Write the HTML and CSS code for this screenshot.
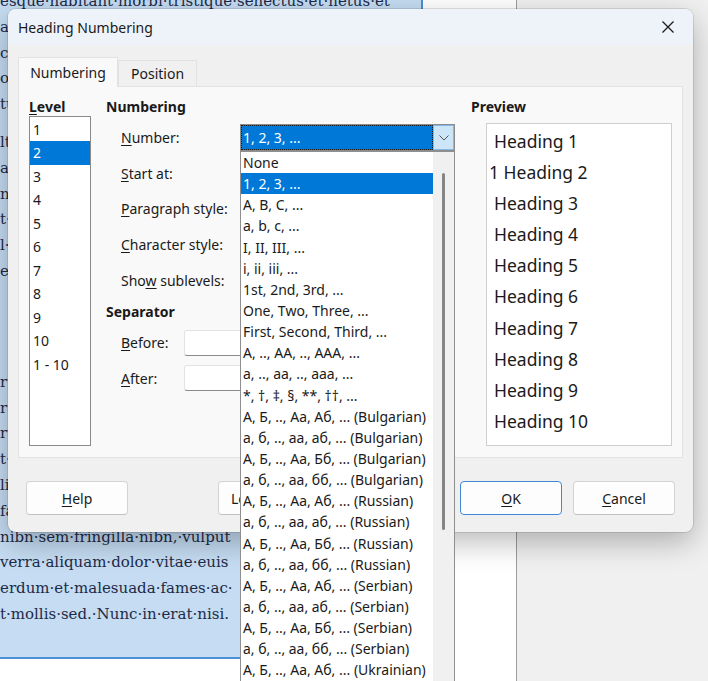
FILE: index.html
```html
<!DOCTYPE html>
<html>
<head>
<meta charset="utf-8">
<link rel="stylesheet" href="styles.css">
</head>
<body>
<div class="workspace">
  <div class="page">
    <div class="sel">
      <div class="para first">
        <div class="line">esque·habitant·morbi·tristique·senectus·et·netus·et</div>
        <div class="line">ale</div>
        <div class="line">co</div>
        <div class="line">o:·</div>
        <div class="line">tur</div>
      </div>
      <div class="para gapbig">
        <div class="line">lt·</div>
        <div class="line">am</div>
        <div class="line">ne</div>
        <div class="line">t·a</div>
        <div class="line">l·c</div>
        <div class="line">em</div>
      </div>
      <div class="para">
        <div class="line">r·t</div>
        <div class="line">ra</div>
        <div class="line">ru</div>
        <div class="line">t·e</div>
        <div class="line">lis</div>
        <div class="line">fa</div>
        <div class="line">nibn·sem·fringilla·nibn,·vulput</div>
        <div class="line">verra·aliquam·dolor·vitae·euis</div>
        <div class="line">erdum·et·malesuada·fames·ac·</div>
        <div class="line">t·mollis·sed.·Nunc·in·erat·nisi.</div>
      </div>
    </div>
  </div>
  <div class="appbg"></div>
</div>

<div class="dialog">
  <div class="titlebar">
    <span class="title">Heading Numbering</span>
    <svg class="close" width="12" height="12" viewBox="0 0 12 12"><path d="M0.5 0.5 L11.5 11.5 M11.5 0.5 L0.5 11.5" stroke="#1b1b1b" stroke-width="1.3" fill="none"/></svg>
  </div>
  <div class="content">
    <div class="tabs">
      <div class="tab active">Numbering</div>
      <div class="tab">Position</div>
    </div>
    <div class="panel">
      <div class="levelcol">
        <div class="heading"><u>L</u>evel</div>
        <div class="levellist">
          <div class="litem">1</div>
          <div class="litem selected">2</div>
          <div class="litem">3</div>
          <div class="litem">4</div>
          <div class="litem">5</div>
          <div class="litem">6</div>
          <div class="litem">7</div>
          <div class="litem">8</div>
          <div class="litem">9</div>
          <div class="litem">10</div>
          <div class="litem">1 - 10</div>
        </div>
      </div>
      <div class="numcol">
        <div class="heading">Numbering</div>
        <div class="rows">
          <div class="row">
            <span class="lbl wide"><u>N</u>umber:</span>
            <div class="combo">
              <div class="field">1, 2, 3, ...</div>
              <div class="dropbtn"><svg width="10" height="6" viewBox="0 0 10 6"><path d="M0.5 0.5 L5 5 L9.5 0.5" stroke="#555" stroke-width="1" fill="none"/></svg></div>
            </div>
          </div>
          <div class="row"><span class="lbl"><u>S</u>tart at:</span></div>
          <div class="row"><span class="lbl"><u>P</u>aragraph style:</span></div>
          <div class="row"><span class="lbl"><u>C</u>haracter style:</span></div>
          <div class="row"><span class="lbl">Sho<u>w</u> sublevels:</span></div>
        </div>
        <div class="heading sep">Separator</div>
        <div class="rows seprows">
          <div class="row"><span class="lbl short"><u>B</u>efore:</span><div class="input"></div></div>
          <div class="row"><span class="lbl short"><u>A</u>fter:</span><div class="input"></div></div>
        </div>
      </div>
      <div class="prevcol">
        <div class="heading">Preview</div>
        <div class="preview">
          <div class="pitem">Heading 1</div>
          <div class="pitem num">1 Heading 2</div>
          <div class="pitem">Heading 3</div>
          <div class="pitem">Heading 4</div>
          <div class="pitem">Heading 5</div>
          <div class="pitem">Heading 6</div>
          <div class="pitem">Heading 7</div>
          <div class="pitem">Heading 8</div>
          <div class="pitem">Heading 9</div>
          <div class="pitem">Heading 10</div>
        </div>
      </div>
    </div>
  </div>
  <div class="buttons">
    <div class="btn"><u>H</u>elp</div>
    <div class="btn loadsave">Load/Save</div>
    <div class="btn ok"><u>O</u>K</div>
    <div class="btn cancel"><u>C</u>ancel</div>
  </div>
</div>

<div class="popup">
  <div class="plist">
    <div class="opt">None</div>
    <div class="opt selected">1, 2, 3, ...</div>
    <div class="opt">A, B, C, ...</div>
    <div class="opt">a, b, c, ...</div>
    <div class="opt">I, II, III, ...</div>
    <div class="opt">i, ii, iii, ...</div>
    <div class="opt">1st, 2nd, 3rd, ...</div>
    <div class="opt">One, Two, Three, ...</div>
    <div class="opt">First, Second, Third, ...</div>
    <div class="opt">A, .., AA, .., AAA, ...</div>
    <div class="opt">a, .., aa, .., aaa, ...</div>
    <div class="opt">*, †, ‡, §, **, ††, ...</div>
    <div class="opt">А, Б, .., Аа, Аб, ... (Bulgarian)</div>
    <div class="opt">а, б, .., аа, аб, ... (Bulgarian)</div>
    <div class="opt">А, Б, .., Аа, Бб, ... (Bulgarian)</div>
    <div class="opt">а, б, .., аа, бб, ... (Bulgarian)</div>
    <div class="opt">А, Б, .., Аа, Аб, ... (Russian)</div>
    <div class="opt">а, б, .., аа, аб, ... (Russian)</div>
    <div class="opt">А, Б, .., Аа, Бб, ... (Russian)</div>
    <div class="opt">а, б, .., аа, бб, ... (Russian)</div>
    <div class="opt">А, Б, .., Аа, Аб, ... (Serbian)</div>
    <div class="opt">а, б, .., аа, аб, ... (Serbian)</div>
    <div class="opt">А, Б, .., Аа, Бб, ... (Serbian)</div>
    <div class="opt">а, б, .., аа, бб, ... (Serbian)</div>
    <div class="opt">А, Б, .., Аа, Аб, ... (Ukrainian)</div>
  </div>
  <div class="pscroll"><div class="thumb"></div></div>
</div>
</body>
</html>
```

FILE: styles.css
```css
* { box-sizing: border-box; }

body {
  margin: 0;
  width: 708px;
  height: 681px;
  overflow: hidden;
  position: relative;
  background: #f0f0f0;
  font-family: "Noto Sans", "Open Sans", sans-serif;
  font-size: 14px;
  color: #1a1a1a;
}

u { text-decoration-thickness: 1px; text-underline-offset: 2px; }

/* background document */
.workspace { display: flex; height: 681px; }
.page {
  width: 517px;
  background: #ffffff;
  border-right: 1px solid #9c9c9c;
}
.sel {
  width: 423px;
  height: 659px;
  background: #c5dcf2;
  border-right: 2px solid #4b8fd5;
  border-bottom: 2px solid #4b8fd5;
  overflow: hidden;
  color: #1d2a48;
  font-family: "DejaVu Serif", "Liberation Serif", serif;
  font-size: 15px;
}
.para { margin: 0 0 12px; }
.para.first { margin-top: -11px; }
.para.gapbig { margin-bottom: 85px; }
.line { height: 25.8px; line-height: 25.8px; white-space: nowrap; }
.appbg { flex: 1; background: #f0f0f0; }

/* dialog */
.dialog {
  position: absolute;
  left: 8px;
  top: 9px;
  width: 685px;
  height: 523px;
  background: #f0f0f0;
  border-radius: 8px;
  box-shadow: 0 10px 30px rgba(0, 0, 0, 0.28), 0 0 0 1px rgba(0, 0, 0, 0.10);
  display: flex;
  flex-direction: column;
}
.titlebar {
  height: 36px;
  flex: none;
  background: #eef3fa;
  border-radius: 8px 8px 0 0;
  display: flex;
  align-items: center;
  justify-content: space-between;
  padding: 0 19px 0 10px;
  font-size: 14px;
}
.close { display: block; }

.content { padding: 12px 10px 0 10px; }
.tabs { display: flex; align-items: flex-end; height: 29px; }
.tab {
  height: 26px;
  padding: 0 12px;
  border: 1px solid #e2e2e2;
  border-bottom: none;
  background: #f0f0f0;
  display: flex;
  align-items: center;
}
.tab.active {
  width: 100px;
  height: 30px;
  justify-content: center;
  background: #f9f9f9;
  margin-bottom: -1px;
  position: relative;
  z-index: 1;
}

.panel {
  height: 372px;
  background: #f9f9f9;
  border: 1px solid #e2e2e2;
  padding: 11px 8px 11px 10px;
  display: flex;
}
.heading { height: 18px; line-height: 18px; font-weight: bold; }

.levelcol { width: 62px; display: flex; flex-direction: column; }
.levellist {
  height: 330px;
  background: #fff;
  border: 1px solid #8a8a8a;
  padding-top: 0.5px;
}
.litem { height: 23.5px; line-height: 23.5px; padding-left: 3px; }
.litem.selected { background: #0078d7; color: #fff; }

.numcol { width: 350px; margin-left: 15px; }
.rows { margin-top: 4px; }
.row { height: 35.6px; display: flex; align-items: center; padding-left: 15px; }
.lbl.wide { width: 119px; }
.lbl.short { width: 63px; }
.heading.sep { margin-top: 5px; }
.seprows { margin-top: 4px; }
.input {
  width: 160px;
  height: 26px;
  background: #fff;
  border: 1px solid #e3e3e3;
  border-bottom-color: #8a8a8a;
  border-radius: 3px;
}

.combo {
  width: 215px;
  height: 27px;
  border: 1px solid #8c8c8c;
  display: flex;
  background: #fff;
}
.field {
  flex: 1;
  background: #0078d7;
  color: #fff;
  outline: 1px dotted #1b1b1b;
  outline-offset: -1px;
  padding-left: 2px;
  line-height: 25px;
}
.dropbtn {
  width: 21px;
  background: #cde6f7;
  border: 1px solid #84b8e6;
  display: flex;
  align-items: center;
  justify-content: center;
}

.prevcol { flex: 1; margin-left: 15px; display: flex; flex-direction: column; }
.preview {
  margin-top: 7px;
  margin-left: 15px;
  width: 186px;
  height: 323px;
  background: #fff;
  border: 1px solid #cfcfcf;
  padding-top: 2px;
  font-size: 17.5px;
}
.pitem { height: 31.1px; line-height: 31.1px; padding-left: 7px; }
.pitem.num { padding-left: 2px; }

.buttons { display: flex; padding: 23px 18px 0 18px; }
.btn {
  width: 102px;
  height: 34px;
  background: #fdfdfd;
  border: 1px solid #d3d3d3;
  border-bottom-color: #c2c2c2;
  border-radius: 4px;
  display: flex;
  align-items: center;
  justify-content: center;
}
.btn.loadsave { margin-left: 90px; width: 112px; justify-content: flex-start; padding-left: 12px; }
.btn.ok { margin-left: auto; border: 1px solid #3f88d4; }
.btn.cancel { margin-left: 11px; }

/* dropdown popup */
.popup {
  position: absolute;
  left: 240px;
  top: 151px;
  width: 215px;
  height: 540px;
  background: #fff;
  border: 1px solid #8f8f8f;
  display: flex;
}
.plist { width: 192px; }
.opt { height: 21.15px; line-height: 21.15px; padding-left: 2px; white-space: nowrap; }
.opt.selected { background: #0078d7; color: #fff; }
.pscroll { flex: 1; background: #f0f0f0; padding: 21px 0 0 9px; }
.thumb { width: 3px; height: 357px; background: #868686; border-radius: 2px; }
```
